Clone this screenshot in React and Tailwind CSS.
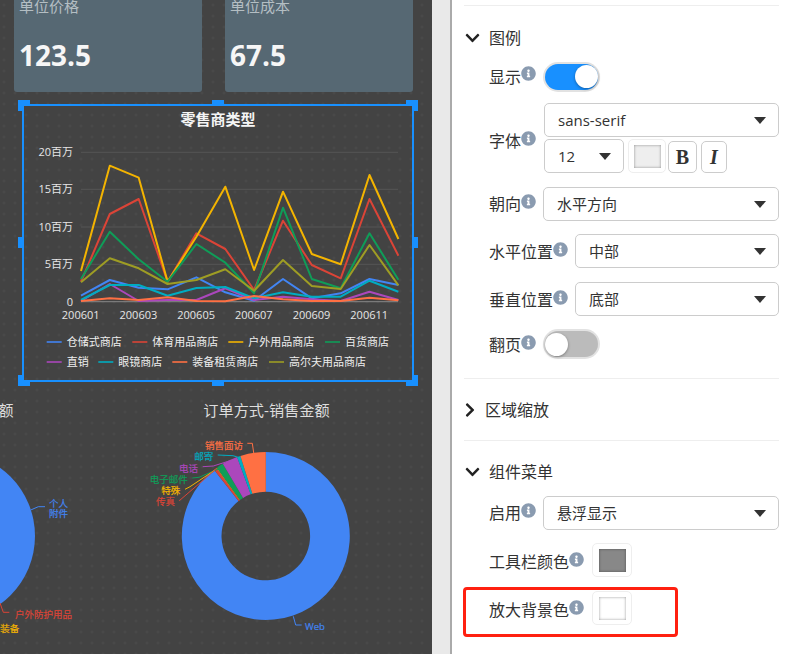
import React from 'react';
import { FaChevronDown, FaChevronRight, FaInfoCircle } from 'react-icons/fa';

const X0 = 81;
const STEP = 28.85;
const toY = (z) => 130 + z / 3;

const SERIES = [
  { name: '仓储式商店', color: '#4285f4', z: [497, 450, 473, 478, 442, 487, 512, 447, 505, 490, 447, 465] },
  { name: '体育用品商店', color: '#db4437', z: [455, 252, 207, 455, 310, 357, 480, 272, 405, 445, 207, 377] },
  { name: '户外用品商店', color: '#f4b400', z: [423, 107, 143, 455, 320, 170, 420, 185, 372, 403, 135, 327] },
  { name: '百货商店', color: '#0f9d58', z: [447, 305, 388, 455, 342, 398, 490, 233, 447, 475, 310, 449] },
  { name: '直销', color: '#ab47bc', z: [513, 462, 513, 510, 510, 475, 510, 500, 508, 513, 485, 510] },
  { name: '眼镜商店', color: '#00acc1', z: [510, 465, 465, 497, 474, 471, 505, 487, 500, 500, 452, 485] },
  { name: '装备租赁商店', color: '#ff7043', z: [513, 505, 510, 502, 513, 514, 498, 508, 513, 513, 503, 511] },
  { name: '高尔夫用品商店', color: '#9e9d24', z: [457, 385, 415, 462, 450, 418, 482, 390, 468, 477, 345, 466] },
];

const LEGEND_POS = [
  [46.7, 342], [132.3, 342], [228.3, 342], [325, 342],
  [46.7, 362], [98.3, 362], [172.3, 362], [269, 362],
];

const GRID = [
  ['20百万', 152.3],
  ['15百万', 189.3],
  ['10百万', 227],
  ['5百万', 264.3],
  ['0', 301.7],
];

const MONTHS = ['200601', '200603', '200605', '200607', '200609', '200611'];

const DONUT = [
  { color: '#4285f4', from: 0, to: 322 },
  { color: '#db4437', from: 322, to: 324 },
  { color: '#f4b400', from: 324, to: 324.4 },
  { color: '#0f9d58', from: 324.4, to: 329.2 },
  { color: '#ab47bc', from: 329.2, to: 340 },
  { color: '#00acc1', from: 340, to: 342.4 },
  { color: '#ff7043', from: 342.4, to: 360 },
];

const DONUT_LABELS = [
  { text: '销售面访', color: '#ff7043', x: 243, y: 445, line: '247.3,443.3 252.3,443.3 254,455' },
  { text: '邮寄', color: '#00acc1', x: 213.3, y: 456, line: '217.7,455 233,455.7 239.3,457.7' },
  { text: '电话', color: '#ab47bc', x: 198, y: 468, line: '202.7,466.7 213.3,466 230,460.7' },
  { text: '电子邮件', color: '#0f9d58', x: 187.7, y: 479, line: '192.3,478 199,477.3 218.3,469' },
  { text: '特殊', color: '#f4b400', x: 180.3, y: 490, line: '185,489.3 190,486.7 215,470' },
  { text: '传真', color: '#db4437', x: 175, y: 501.7, line: '179.3,500.7 215,470' },
];

// one ring slice, angles clockwise from the top
const slice = (cx, cy, r0, r1, from, to) => {
  const pt = (r, a) => {
    const rad = (a * Math.PI) / 180;
    return `${(cx + r * Math.sin(rad)).toFixed(2)} ${(cy - r * Math.cos(rad)).toFixed(2)}`;
  };
  const large = to - from > 180 ? 1 : 0;
  return `M${pt(r1, from)}A${r1} ${r1} 0 ${large} 1 ${pt(r1, to)}L${pt(r0, to)}A${r0} ${r0} 0 ${large} 0 ${pt(r0, from)}Z`;
};

const LineChart = () => (
  <svg viewBox="24 106 388 274" width="388" height="274" className="block">
    <text x="218" y="125" textAnchor="middle" fontSize="15" fontWeight="700" fill="#f5f5f5">零售商类型</text>
    {GRID.map(([label, y]) => (
      <g key={label}>
        <line x1="81" x2="398" y1={y} y2={y} stroke={y > 300 ? '#888888' : '#565656'} strokeWidth="1" />
        <text x="73" y={y + 4} textAnchor="end" fontSize="11" fill="#e6e6e6">{label}</text>
      </g>
    ))}
    {MONTHS.map((m, i) => (
      <text key={m} x={80.7 + i * 57.7} y="319" textAnchor="middle" fontSize="11" fill="#e6e6e6">{m}</text>
    ))}
    {SERIES.map((s) => {
      const points = s.z.map((z, i) => `${(X0 + i * STEP).toFixed(1)},${toY(z).toFixed(1)}`).join(' ');
      return <polyline key={s.name} points={points} fill="none" stroke={s.color} strokeWidth="2" strokeLinejoin="round" />;
    })}
    {SERIES.map((s, i) => {
      const [x, y] = LEGEND_POS[i];
      return (
        <g key={s.name}>
          <line x1={x} x2={x + 15} y1={y} y2={y} stroke={s.color} strokeWidth="1.6" />
          <text x={x + 20} y={y + 4} fontSize="11" fill="#eeeeee">{s.name}</text>
        </g>
      );
    })}
  </svg>
);

const LeftPie = () => (
  <svg viewBox="-207 395 315 259" width="315" height="259" className="block shrink-0">
    <text x="-49" y="416" textAnchor="middle" fontSize="15" fill="#dddddd">产品类型-销售金额</text>
    <circle cx="-49" cy="536" r="84" fill="#4285f4" />
    <polyline points="30.7,510 38.3,506.7 45,506.7" fill="none" stroke="#4285f4" />
    <text x="49" y="506.5" fontSize="9.5" fill="#4285f4" stroke="#4285f4" strokeWidth="0.2">个人</text>
    <text x="49" y="516.5" fontSize="9.5" fill="#4285f4" stroke="#4285f4" strokeWidth="0.2">附件</text>
    <polyline points="0,603 3.3,612.3 9.3,612.3" fill="none" stroke="#db4437" />
    <text x="15" y="618" fontSize="9.5" fill="#db4437" stroke="#db4437" strokeWidth="0.2">户外防护用品</text>
    <text x="19.3" y="632" textAnchor="end" fontSize="9.5" fill="#f4b400" stroke="#f4b400" strokeWidth="0.2">骑行装备</text>
  </svg>
);

const Donut = () => (
  <svg viewBox="108 395 315 259" width="315" height="259" className="block shrink-0">
    <text x="266.5" y="416" textAnchor="middle" fontSize="15.2" fill="#dddddd">订单方式-销售金额</text>
    {DONUT.map((d) => (
      <path key={d.color} d={slice(265.8, 536, 44.3, 84, d.from, d.to)} fill={d.color} />
    ))}
    <polyline points="293.3,616.3 295.7,625 301.7,625" fill="none" stroke="#4285f4" />
    <text x="305" y="629.5" fontSize="9.5" fill="#4285f4" stroke="#4285f4" strokeWidth="0.2">Web</text>
    {DONUT_LABELS.map((l) => (
      <g key={l.text}>
        <polyline points={l.line} fill="none" stroke={l.color} />
        <text x={l.x} y={l.y + 3.5} textAnchor="end" fontSize="9.5" fill={l.color} stroke={l.color} strokeWidth="0.2">{l.text}</text>
      </g>
    ))}
  </svg>
);

const StatCard = ({ label, value }) => (
  <div className="w-[187.5px] h-[100px] shrink-0 rounded-[3px] bg-[#566873] pl-[5px]">
    <div className="text-[15px] leading-[22px] mt-[3px] text-[#b4bec3]">{label}</div>
    <div className="mt-[19px] text-[28px] leading-[38px] font-bold text-[#f6f6f6]">{value}</div>
  </div>
);

const Canvas = () => (
  <div className="w-[432px] h-[654px] shrink-0 overflow-hidden bg-[#434343] bg-[radial-gradient(circle,#4b4b4b_1px,transparent_1.3px)] bg-[length:11px_11px] bg-[position:-1.5px_-0.5px]">
    <div className="flex gap-[23.5px] pl-[14px] -mt-[8px]">
      <StatCard label="单位价格" value="123.5" />
      <StatCard label="单位成本" value="67.5" />
    </div>
    <div className="relative ml-[22px] mt-[12px] w-[392px] h-[278px] border-2 border-[#1890ff]">
      <LineChart />
      <span className="absolute -left-[6px] -top-[6px] w-[12px] h-[11px] border-l-[4px] border-t-[4px] border-[#1890ff]" />
      <span className="absolute -right-[6px] -top-[6px] w-[12px] h-[11px] border-r-[4px] border-t-[4px] border-[#1890ff]" />
      <span className="absolute -left-[6px] -bottom-[6px] w-[12px] h-[11px] border-l-[4px] border-b-[4px] border-[#1890ff]" />
      <span className="absolute -right-[6px] -bottom-[6px] w-[12px] h-[11px] border-r-[4px] border-b-[4px] border-[#1890ff]" />
      <span className="absolute left-[188px] -top-[6px] w-[12px] h-[4px] bg-[#1890ff]" />
      <span className="absolute left-[188px] -bottom-[6px] w-[12px] h-[4px] bg-[#1890ff]" />
      <span className="absolute -left-[6px] top-[131px] w-[4px] h-[11px] bg-[#1890ff]" />
      <span className="absolute -right-[6px] top-[131px] w-[4px] h-[11px] bg-[#1890ff]" />
    </div>
    <div className="flex -ml-[207px] mt-[13px]">
      <LeftPie />
      <Donut />
    </div>
  </div>
);

const Info = () => <FaInfoCircle className="w-[15px] h-[15px] shrink-0 text-[#8a9bb0] -mt-[6px]" />;

const Label = ({ children, className = '' }) => (
  <div className={`flex items-center shrink-0 text-base leading-6 text-[#333] ${className}`}>
    <span>{children}</span>
    <Info />
  </div>
);

const Caret = () => (
  <svg width="12" height="7" viewBox="0 0 12 7" className="shrink-0">
    <polygon points="0,0 12,0 6,7" fill="#333" />
  </svg>
);

const Select = ({ value, className }) => (
  <div className={`h-[34px] flex items-center justify-between pl-[13px] pr-[12px] rounded-[5px] border border-[#ccc] bg-white text-[15px] text-[#333] ${className}`}>
    <span>{value}</span>
    <Caret />
  </div>
);

const Toggle = ({ on }) => (
  <div className={`w-[53px] h-[26px] rounded-full shadow-[0_0_0_2px_#e2e2e2] flex items-center ${on ? 'bg-[#1890ff] justify-end' : 'bg-[#bbbbbb] justify-start'}`}>
    <div className="w-[23px] h-[23px] rounded-full bg-white shadow-[0_1px_3px_rgba(0,0,0,0.35)]" />
  </div>
);

const Swatch = ({ color, className = 'w-[40px]' }) => (
  <div className={`h-[34px] flex items-center justify-center rounded-[5px] border border-[#eeeeee] bg-white ${className}`}>
    <div className={`w-[27px] h-[23px] shadow-[inset_0_0_3px_rgba(0,0,0,0.4)] ${color}`} />
  </div>
);

const Section = ({ title, open, className }) => (
  <div className={`flex items-center h-6 text-base text-[#333] ${className}`}>
    {open ? <FaChevronDown className="w-[15px] h-4 text-[#222] ml-px" /> : <FaChevronRight className="w-[10px] h-4 text-[#222] ml-px" />}
    <span className={open ? 'ml-[9px]' : 'ml-[10px]'}>{title}</span>
  </div>
);

const Row = ({ children, className }) => (
  <div className={`flex items-center pl-[25px] ${className}`}>{children}</div>
);

const Panel = () => (
  <div className="flex-1 h-[654px] overflow-hidden bg-white pl-[12px] pr-[25px] pt-[5px]">
    <div className="border-t border-[#eeeeee]" />
    <Section title="图例" open className="mt-[20px]" />
    <Row className="mt-[13px] h-[27px] gap-[9px]">
      <Label>显示</Label>
      <Toggle on />
    </Row>
    <Row className="mt-[13px] gap-[8px]">
      <Label className="mt-[6px]">字体</Label>
      <div className="flex-1 flex flex-col gap-[2px]">
        <Select value="sans-serif" />
        <div className="flex items-center">
          <Select value="12" className="w-[80px]" />
          <Swatch color="bg-[#eeeeee]" className="w-[38px] ml-[4px]" />
          <div className="flex gap-[4px] ml-[2px] mt-px font-['Liberation_Serif',serif] text-[20px] leading-none text-[#333]">
            <div className="w-[29px] h-[32px] flex items-center justify-center rounded-[5px] border border-[#ccc] font-bold">B</div>
            <div className="w-[26px] h-[32px] flex items-center justify-center rounded-[5px] border border-[#ccc] font-bold italic">I</div>
          </div>
        </div>
      </div>
    </Row>
    <Row className="mt-[14px] gap-[7px]">
      <Label>朝向</Label>
      <Select value="水平方向" className="flex-1" />
    </Row>
    <Row className="mt-[13px] gap-[7px]">
      <Label className="mt-[2px]">水平位置</Label>
      <Select value="中部" className="flex-1" />
    </Row>
    <Row className="mt-[14px] gap-[7px]">
      <Label className="mt-[2px]">垂直位置</Label>
      <Select value="底部" className="flex-1" />
    </Row>
    <Row className="mt-[14px] h-[28px] gap-[9px]">
      <Label className="mt-[2px]">翻页</Label>
      <Toggle />
    </Row>
    <div className="mt-[20px] border-t border-[#eeeeee]" />
    <Section title="区域缩放" className="mt-[19px]" />
    <div className="mt-[18px] border-t border-[#eeeeee]" />
    <Section title="组件菜单" open className="mt-[19px]" />
    <Row className="mt-[12px] gap-[7px]">
      <Label>启用</Label>
      <Select value="悬浮显示" className="flex-1" />
    </Row>
    <Row className="mt-[13px] gap-[8px]">
      <Label className="mt-[4px]">工具栏颜色</Label>
      <Swatch color="bg-[#888888]" />
    </Row>
    <Row className="relative mt-[14px] gap-[8px]">
      <Label className="mt-[4px]">放大背景色</Label>
      <Swatch color="bg-white" />
      <div className="absolute -left-px -top-[4px] w-[215px] h-[50px] rounded-[4px] border-[3px] border-[#ff2010]" />
    </Row>
  </div>
);

export default function App() {
  return (
    <div className="flex w-[804px] h-[654px] overflow-hidden font-['Open_Sans','Noto_Sans_CJK_SC',sans-serif]">
      <Canvas />
      <div className="w-[20px] h-[654px] shrink-0 bg-[#e9e9e9] border-r-2 border-[#aaaaaa]" />
      <Panel />
    </div>
  );
}
